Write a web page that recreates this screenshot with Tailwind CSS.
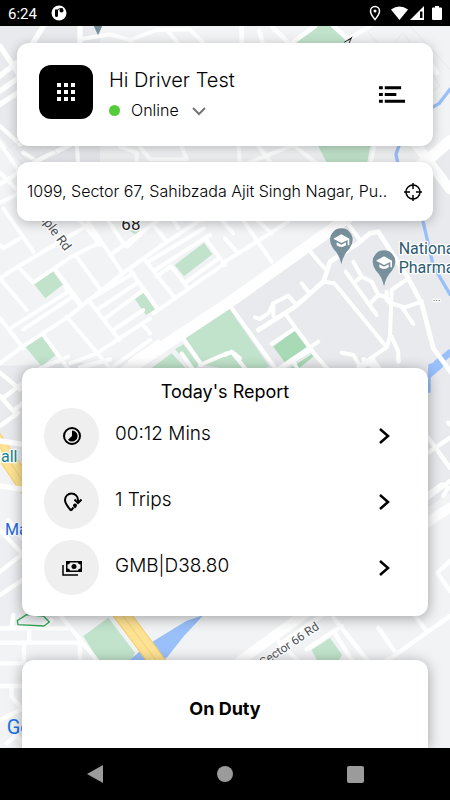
<!DOCTYPE html>
<html lang="en">

<head>
    <meta charset="UTF-8">
    <meta name="viewport" content="width=device-width, initial-scale=1.0">
    <title>Driver</title>
    <script src="https://cdn.jsdelivr.net/npm/@tailwindcss/browser@4"></script>
</head>

<body class="min-h-screen flex flex-col bg-black text-black font-['Inter',sans-serif]">

    <!-- Status bar -->
    <header class="h-[26px] px-2 flex items-center bg-black text-white">
        <span class="pt-0.5 text-[15px] font-['Roboto',sans-serif]">6:24</span>
        <svg class="ml-3.5 size-4" viewBox="0 0 16 16">
            <circle cx="8" cy="8" r="7.5" fill="#fff" />
            <path d="M4 4.500h3v6a1.500 1.500 0 0 1-3 0z" fill="#000" />
            <path d="M7 4.500q3-2 5-.5" stroke="#000" fill="none" />
            <circle cx="10.500" cy="5.500" r="2" fill="#000" />
        </svg>
        <div class="ml-auto flex items-center">
            <svg class="w-3 h-4" viewBox="0 0 12 16" fill="none" stroke="#fff" stroke-width="1.500">
                <path d="M6 14.500C3 11 1.500 8.500 1.500 6a4.500 4.500 0 0 1 9 0c0 2.500-1.500 5-4.500 8.500z" />
                <circle cx="6" cy="6" r="1.500" fill="#fff" stroke="none" />
            </svg>
            <svg class="ml-2.5 w-[17px] h-4" viewBox="0 0 17 16" fill="#fff">
                <path d="M0 4.500Q8.500-1.500 17 4.500L8.500 15z" />
            </svg>
            <svg class="ml-0.5 w-3.5 h-4" viewBox="0 0 14 16">
                <path d="M14 1v14H0z" fill="#fff" />
                <path d="M10 6.500h2.500V13H10z" fill="#000" />
            </svg>
            <svg class="ml-2 w-2.5 h-4" viewBox="0 0 10 16" fill="#fff">
                <path d="M3 1h4v1.500h2q1 0 1 1V14q0 1-1 1H1q-1 0-1-1V3.500q0-1 1-1h2z" />
            </svg>
        </div>
    </header>

    <main class="relative flex-1 flex flex-col overflow-hidden bg-[#f1f3f4]">

        <!-- Map -->
        <svg class="absolute inset-0 w-full h-full" viewBox="0 0 1350 2166" preserveAspectRatio="xMinYMin slice"
            fill="none" stroke-linecap="round" stroke-linejoin="round">
            <!-- built-up areas -->
            <g fill="#e8eaed">
                <path d="M0 0H300V460L150 530L0 330z" />
                <path d="M675 840L1300 390L1350 340V1400L1230 1480L560 1480L560 920z" />
                <path d="M0 1020L250 1010V1500L0 1260z" />
                <path d="M0 1540L200 1450L240 1770L0 1800z" fill="#eceef1" />
            </g>
            <!-- parks -->
            <g fill="#c1e3cb">
                <path d="M870 50L935 0H1000L1050 60zM950 350H1112L1100 420H985z" />
                <path d="M102 775L158 734L188 776L136 817z" />
                <path d="M404 818L430 800L465 850L438 867z" />
                <path d="M524 717L612 650L637 685L552 751z" />
                <path d="M76 962L126 928L167 988L125 1021z" />
                <path d="M390 615L405 625L418 616L410 605z" />
                <path d="M552 937L682 840L808 1022L740 1040L600 1015z" />
                <path d="M450 1030L515 982L560 1030zM525 970L550 955L597 1018L580 1030z" />
                <path d="M250 1830L325 1775L405 1880L390 1910H300z" />
                <path d="M935 1872L990 1836L1027 1888L1010 1910H955z" />
                <path d="M820 962L883 914L925 970L858 1014z" fill="#a8dab5" />
                <path d="M850 1040L935 985L940 992L880 1040z" fill="#a8dab5" />
            </g>
            <!-- water -->
            <path d="M440 1858L560 1784L610 1768L552 1830L500 1895L470 1910H380z" fill="#9ac0fa" />
            <path d="M1285 1015L1335 1000L1330 1022L1292 1055V1100L1280 1100z" fill="#9ac0fa" />
            <g stroke="#9ac0fa" stroke-width="10">
                <path d="M1350 190L1318 232L1290 248L1200 350L1188 385L1195 420L1270 590L1300 720L1350 805" />
                <path d="M1350 980L1310 1012" stroke-width="20" />
            </g>
            <!-- highway -->
            <path d="M-20 1235L75 1375L440 1865L480 1920" stroke="#f5cf6c" stroke-width="50" />
            <path d="M-20 1235L75 1375L440 1865L480 1920" stroke="#fde293" stroke-width="44" />
            <path d="M-20 1235L75 1375L440 1865L480 1920" stroke="#edc568" stroke-width="2" />

            <!-- main roads -->
            <g stroke="#fff">
                <path d="M300 1085L460 980L690 828L995 610L1285 400L1350 345" stroke-width="34" />
                <path d="M1240 345L1350 490" stroke-width="30" />
                <path d="M-10 480L120 400L330 300" stroke-width="14" />
                <path d="M720 1905L905 1770L1210 1535L1350 1445" stroke-width="30" />
                <path d="M0 1245L70 1255M0 1380L70 1390" stroke-width="16" />
            </g>
            <!-- streets, upper strip -->
            <g stroke="#fff" stroke-width="12">
                <path d="M130 0L75 90L0 150M0 60L60 150M0 195L70 145M0 235L70 190M240 0V60" stroke-width="16" />
                <path d="M240 40L330 25L390 42L470 12L570 10L610 50M390 42L400 60M500 10L540 60" />
                <path d="M725 0V60M778 15L790 60M815 0L870 55L945 0M1000 0L1045 40L1110 0M1290 110L1310 140" stroke-width="14" />
                <path d="M0 300L60 355L100 340M0 350L60 440M230 350L235 420M360 362L410 380V420M420 362L450 400L560 400L540 350" />
                <path d="M715 350L720 420L900 350M775 360L820 420M870 350L960 420M1125 350L1110 420" />
                <path d="M0 440L60 500L0 530M70 380L150 430" />
            </g>
            <g stroke="#e1e4e8" stroke-width="2">
                <path d="M20 370L100 320L170 380L90 430zM50 370L100 345L135 380L85 410z" />
                <path d="M1105 20L1290 220M1150 90L1210 20L1320 180L1260 220M1190 90L1215 60L1290 160M1230 0L1350 130" />
            </g>
            <!-- streets, left blocks -->
            <g transform="translate(0 552)" stroke="#fff" stroke-width="12">
                <path d="M0 460L60 415L205 320L375 185L480 110L675 -20" />
                <path d="M0 205L50 172L265 45M10 -5L100 125M0 105L10 115L60 85M0 205L80 300" />
                <path d="M55 172L100 218L215 140L295 100M165 178L245 285M230 140L302 240M300 105L240 30M260 30L365 185M330 135L470 35" />
                <path d="M0 325L70 415M35 352L205 245M70 358L215 262M195 230L240 285" />
                <path d="M130 375L215 490M120 475L205 440M200 320L330 475M210 460L290 430L450 325" />
                <path d="M265 270L358 390M275 265L400 190M290 300L410 220M315 325L425 245M340 360L430 300" />
                <path d="M390 180L475 300M435 150L525 265M445 155L612 55M465 180L630 75M470 200L510 170M515 170L560 230" />
                <path d="M460 310L675 160M620 90L675 165M560 215L650 150M430 345L450 370M340 470L450 390M390 455L475 395" />
                <path d="M310 10L370 100M460 45L500 95M500 0L535 55M640 0L700 70M380 110L420 75" />
                <path d="M550 385L605 465M545 430L580 480M600 465L680 430" />
            </g>
            <!-- streets, campus -->
            <g transform="translate(675 552)" stroke="#fff" stroke-width="12">
                <path d="M10 280L155 480L280 395M140 402L210 355M180 310L275 440L320 490" />
                <path d="M100 360L210 290L295 215L315 155L400 100L435 70L460 65L495 120L550 205L590 280L625 415L680 490" stroke-width="14" />
                <path d="M90 322L105 327L130 310L145 280L190 257L210 280M145 280V318M230 220L250 245M250 118L298 175M310 65L325 90M372 45L405 90" />
                <path d="M295 215L328 220L485 412L495 380L500 240L550 205M362 185L455 315M385 155L410 200L440 215L460 255L435 280M395 212L410 200" />
                <path d="M460 255L480 260L500 280L540 292L590 275M485 245V270L500 285M530 290L565 342M500 380L520 425V455M485 412L400 470M350 428L385 435L400 460M440 445L475 490" />
                <path d="M50 25L140 155M90 25L140 70M0 85L35 125M0 155L190 35M0 435L20 425L60 475M20 425L45 445" />
                <path d="M160 480L250 425M205 455L225 490" />
            </g>
            <!-- streets, beside the report card -->
            <g stroke="#fff" stroke-width="13">
                <path d="M0 1110L40 1155L70 1130M10 1115L90 1055M0 1200L55 1160M0 1040L60 1090" />
                <path d="M240 1025L330 1000M1060 1040L1120 1000M1090 1000L1130 1030M1195 1000L1196 1005" />
                <path d="M1270 1215L1350 1325M1270 1290L1350 1235M1270 1425L1350 1365M1290 1400L1325 1375L1345 1385L1330 1410M1345 1190L1350 1195" />
                <path d="M1350 1605L1312 1640L1350 1695M1350 1770L1110 1940M1245 1770L1280 1815M1135 1805L1190 1885L1120 1925M1000 1775L1100 1900M1025 1800L920 1870M1000 1815L1060 1910M835 1845L900 1910M840 1855L1000 1745" />
            </g>
            <!-- streets, bottom left -->
            <g transform="translate(0 1422)" stroke="#fff" stroke-width="13">
                <path d="M0 90L70 165M25 60L70 120M0 215L70 160M0 285L75 235M0 385H200M0 428H240M88 390V425M180 345L290 480M40 345L35 385H120L155 360" />
                <path d="M0 490H70M72 430V490M240 430V490M0 558H75M35 560V590L70 630M0 660L70 625M20 730L50 705L70 730M150 490H260" />
            </g>
            <path d="M52 1784L80 1766L130 1770L148 1788L132 1800L54 1796z" stroke="#34a35a" stroke-width="4" />

            <!-- place pins -->
            <g fill="#78909c">
                <path d="M268 -30H320L294 28z" />
                <path d="M1024 715Q1018 685 1000 668Q990 655 990 641A34 34 0 0 1 1058 641Q1058 655 1048 668Q1030 685 1024 715z" />
                <path d="M1152 781Q1146 751 1128 734Q1118 721 1118 707A34 34 0 0 1 1186 707Q1186 721 1176 734Q1158 751 1152 781z" />
            </g>
            <g fill="#fff">
                <path d="M1000 638L1024 625L1048 638V658H1043V642L1024 651zM1010 649L1024 656L1038 649V658Q1024 668 1010 658z" />
                <path d="M1128 704L1152 691L1176 704V724H1171V708L1152 717zM1138 715L1152 722L1166 715V724Q1152 734 1138 724z" />
            </g>

            <!-- labels -->
            <g font-family="Roboto, sans-serif" stroke="#fff" stroke-width="8" paint-order="stroke">
                <text x="364" y="612" font-size="51" fill="#202124">68</text>
                <text x="1196" y="685" font-size="48" fill="#2b5a70">National</text>
                <text x="1196" y="740" font-size="48" fill="#2b5a70">Pharmac</text>
                <text x="1298" y="824" font-size="30" fill="#5f6368">...</text>
                <text x="-39" y="1308" font-size="48" fill="#12838c">Mall</text>
                <text x="15" y="1527" font-size="48" fill="#1a66e8">Market</text>
                <text x="20" y="2124" font-size="60" fill="#1a73e8" stroke="none">Google</text>
                <text font-size="39" fill="#4b5057" transform="translate(84 530) rotate(53)">Temple Rd</text>
                <text font-size="36" fill="#4b5057" transform="translate(790 1922) rotate(-34)">Sector 66 Rd</text>
            </g>
            <path d="M1034 48L1054 36L1046 54M1056 34L1046 42" stroke="#222" stroke-width="3" />
        </svg>

        <!-- Driver card -->
        <section class="relative mx-[17px] mt-[17px] h-[103px] pl-[22px] pr-7 flex items-center rounded-xl bg-white shadow-[0_2px_12px_rgba(0,0,0,0.25)]">
            <button type="button" aria-label="Apps" class="size-[54px] -mt-1.5 flex items-center justify-center rounded-xl bg-black">
                <svg class="size-5" viewBox="0 0 20 20" fill="#fff">
                    <path d="M1 1h4v4H1zM8 1h4v4H8zM15 1h4v4h-4zM1 8h4v4H1zM8 8h4v4H8zM15 8h4v4h-4zM1 15h4v4H1zM8 15h4v4H8zM15 15h4v4h-4z" />
                </svg>
            </button>
            <div class="ml-4 -mt-0.5 flex-1">
                <h1 class="text-[20px] leading-8 font-light">Hi Driver Test</h1>
                <div class="flex items-center h-7">
                    <span class="mt-0.5 size-[11px] rounded-full bg-[#55cc39]"></span>
                    <label for="status" class="sr-only">Status</label>
                    <select id="status" class="w-[61px] ml-[11px] appearance-none bg-transparent text-[16px] font-light">
                        <option>Online</option>
                        <option>Offline</option>
                    </select>
                    <svg class="mt-0.5 w-3.5 h-2.5" viewBox="0 0 14 10" fill="none" stroke="#757575" stroke-width="2">
                        <path d="M1 2l6 6 6-6" />
                    </svg>
                </div>
            </div>
            <button type="button" aria-label="Menu">
                <svg class="w-[27px] h-5" viewBox="0 0 28 20">
                    <path d="M1 1h4v3H1zM7 1h17v3H7zM1 8h4v3H1zM7 8h12v3H7zM1 15h4v3H1zM7 15h21v3H7z" />
                </svg>
            </button>
        </section>

        <!-- Address -->
        <section class="relative mx-[17px] mt-4 h-[59px] px-2.5 flex items-center rounded-xl bg-white shadow-[0_2px_12px_rgba(0,0,0,0.25)]">
            <p class="flex-1 pb-0.5 text-[16px] font-light whitespace-nowrap">1099, Sector 67, Sahibzada Ajit Singh Nagar, Pu..</p>
            <button type="button" aria-label="Locate me">
                <svg class="size-5" viewBox="0 0 20 20" fill="none" stroke="#000" stroke-width="1.500">
                    <circle cx="10" cy="10" r="7" />
                    <path d="M10 1v6M10 13v6M1 10h6M13 10h6" />
                </svg>
            </button>
        </section>

        <!-- Report -->
        <section class="relative mx-[22px] mt-[147px] h-[248px] px-[22px] pt-3 rounded-xl bg-white shadow-[0_2px_14px_rgba(0,0,0,0.35)]">
            <h2 class="h-7 text-center text-[18px] leading-6">Today's Report</h2>
            <div class="flex flex-col gap-[11px]">
                <button type="button" class="flex items-center pr-3.5 text-left">
                    <span class="size-[55px] flex items-center justify-center rounded-full bg-[#efefef]">
                        <svg class="size-5" viewBox="0 0 20 20">
                            <circle cx="10" cy="10" r="8" fill="none" stroke="#000" stroke-width="2" />
                            <path d="M10 4.500a5.500 5.500 0 1 1-4 9.200L10 10z" />
                        </svg>
                    </span>
                    <span class="ml-4 pb-0.5 flex-1 text-[19px] font-light">00:12 Mins</span>
                    <svg class="w-3.5 h-4" viewBox="0 0 14 16" fill="none" stroke="#000" stroke-width="2.500">
                        <path d="M2 1l8 7-8 7" />
                    </svg>
                </button>
                <button type="button" class="flex items-center pr-3.5 text-left">
                    <span class="size-[55px] flex items-center justify-center rounded-full bg-[#efefef]">
                        <svg class="size-5" viewBox="0 0 20 20" fill="none" stroke="#000" stroke-width="2">
                            <path d="M9 18.500C5 14 3 11 3 8a6.500 6.500 0 0 1 13 0v2M12.500 7.500l3.500 3.500 3.500-3.500" />
                            <path d="M9 18.500l2.500-3" />
                            <path d="M13 11.500a2 2 0 0 1 2 2q0 1-2 3-2-2-2-3a2 2 0 0 1 2-2z" fill="#000" stroke="none" />
                        </svg>
                    </span>
                    <span class="ml-4 pb-0.5 flex-1 text-[19px] font-light">1 Trips</span>
                    <svg class="w-3.5 h-4" viewBox="0 0 14 16" fill="none" stroke="#000" stroke-width="2.500">
                        <path d="M2 1l8 7-8 7" />
                    </svg>
                </button>
                <button type="button" class="flex items-center pr-3.5 text-left">
                    <span class="size-[55px] flex items-center justify-center rounded-full bg-[#efefef]">
                        <svg class="size-5" viewBox="0 0 20 20">
                            <path d="M1 7v10h15" fill="none" stroke="#000" stroke-width="1.500" />
                            <path d="M4 3h16v11H4z" />
                            <path d="M8 4.500h8q0 2 2.500 2v4q-2.500 0-2.500 2H8q0-2-2.500-2v-4q2.500 0 2.500-2z" fill="#efefef" />
                            <circle cx="12" cy="8.500" r="2.500" />
                        </svg>
                    </span>
                    <span class="ml-4 pb-0.5 flex-1 text-[19px] font-light">GMB|D38.80</span>
                    <svg class="w-3.5 h-4" viewBox="0 0 14 16" fill="none" stroke="#000" stroke-width="2.500">
                        <path d="M2 1l8 7-8 7" />
                    </svg>
                </button>
            </div>
        </section>

        <!-- Duty -->
        <button type="button" class="relative mx-[22px] mt-11 flex-1 min-h-[88px] pt-2 rounded-t-xl bg-white text-[18px] font-bold shadow-[0_2px_14px_rgba(0,0,0,0.35)]">On Duty</button>
    </main>

    <!-- System navigation -->
    <nav class="h-[52px] flex items-center justify-center bg-black">
        <button type="button" aria-label="Back" class="w-[130px] flex justify-center">
            <svg class="w-4 h-[18px]" viewBox="0 0 16 18" fill="#9b9b9b">
                <path d="M16 0v18L0 9z" />
            </svg>
        </button>
        <button type="button" aria-label="Home" class="w-[130px] flex justify-center">
            <span class="size-4 rounded-full bg-[#9b9b9b]"></span>
        </button>
        <button type="button" aria-label="Recents" class="w-[130px] flex justify-center">
            <span class="size-[17px] rounded-xs bg-[#9b9b9b]"></span>
        </button>
    </nav>

</body>

</html>
